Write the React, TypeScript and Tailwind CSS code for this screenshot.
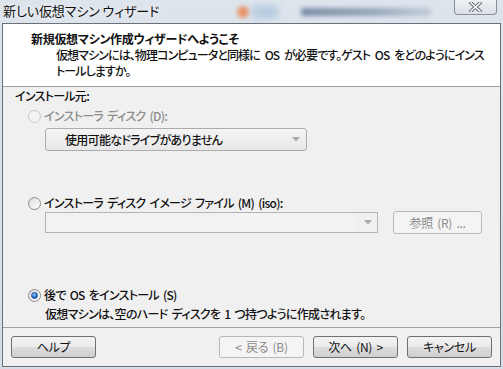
import React from "react";

const font = "[font-family:'Noto_Sans_CJK_JP','Noto_Sans',sans-serif] [font-feature-settings:'palt']";

function Radio({ checked = false, disabled = false }: { checked?: boolean; disabled?: boolean }) {
  return (
    <span
      className={
        "relative flex h-[13px] w-[13px] shrink-0 items-center justify-center rounded-full border " +
        (disabled
          ? "border-[#c8c8c8] bg-[#f4f4f4]"
          : "border-[#8a8a8a] bg-[linear-gradient(135deg,#dcdcdc,#ffffff)]")
      }
    >
      {checked && (
        <span className="h-[7px] w-[7px] rounded-full border border-[#1b4d9a] bg-[radial-gradient(circle_at_40%_35%,#9fd3ff,#2a6fcf_55%,#0d3a85)]" />
      )}
    </span>
  );
}

function Arrow({ color = "#a7a7a7" }: { color?: string }) {
  return (
    <svg width="8" height="5" viewBox="0 0 8 5">
      <path d="M0 0 L8 0 L4 4.5 Z" fill={color} />
    </svg>
  );
}

function Btn({ children, disabled = false, className = "" }: { children: React.ReactNode; disabled?: boolean; className?: string }) {
  return (
    <div
      className={
        "flex h-[22px] w-[85px] items-center justify-center whitespace-nowrap rounded-[3px] border text-[12px] font-normal leading-none tracking-[-0.3px] [word-spacing:2px] " +
        (disabled
          ? "border-[#b5b9bd] bg-[#f4f4f4] text-[#8a8a8a]"
          : "border-[#707070] bg-[linear-gradient(to_bottom,#f2f2f2_0%,#ebebeb_50%,#dddddd_51%,#cfcfcf_100%)] text-[#111]") +
        " " +
        className
      }
    >
      {children}
    </div>
  );
}

export default function App() {
  return (
    <div className={"h-[369px] w-[503px] overflow-hidden bg-[linear-gradient(to_bottom,#dde4ec,#d5dde7)] " + font}>
      {/* title bar */}
      <div className="flex h-[23px] items-start">
        <div className="ml-[3px] mt-[2px] whitespace-nowrap text-[13px] leading-[17px] tracking-[-0.1px] text-[#111] [text-shadow:0_0_6px_#ffffff]">
          新しい仮想マシン ウィザード
        </div>
        <div className="ml-[78px] mt-[6px] h-[12px] w-[12px] rounded-full bg-[#e9946a] blur-[2px]" />
        <div className="ml-[2px] mt-[5px] h-[14px] w-[28px] rounded-full bg-[#b9cde0] blur-[3px]" />
        <div className="ml-[22px] mt-[8px] h-[8px] w-[130px] rounded-[2px] bg-[linear-gradient(to_right,#7c8ea6,#9aa9bd_60%,#c2ccd8)] blur-[2px]" />
        <div className="ml-auto mr-[6px] flex h-[15px] w-[43px] items-center justify-center rounded-b-[4px] border border-t-0 border-[#8a909a] bg-[linear-gradient(to_bottom,#eef1f5,#dbe0e7)]">
          <svg width="13" height="10" viewBox="0 0 13 10">
            <path d="M2 1 L11 9 M11 1 L2 9" stroke="#5f6670" strokeWidth="3.4" strokeLinecap="square" />
            <path d="M2 1 L11 9 M11 1 L2 9" stroke="#ffffff" strokeWidth="1.6" strokeLinecap="square" />
          </svg>
        </div>
      </div>

      {/* client */}
      <div className="ml-[2px] flex h-[344px] w-[499px] flex-col border border-[#6b7077] bg-[#f0f0f0]">
        {/* header */}
        <div className="h-[63px] shrink-0 border-b border-[#a0a0a0] bg-white">
          <div className="whitespace-nowrap pl-[28px] pt-[7px] text-[12px] font-bold leading-[16px] tracking-[-0.3px] text-[#111]">
            新規仮想マシン作成ウィザードへようこそ
          </div>
          <div className="whitespace-nowrap pl-[53px] text-[12px] font-medium leading-[16px] tracking-[-0.9px] text-[#111] [word-spacing:3px]">
            仮想マシンには、物理コンピュータと同様に OS が必要です。ゲスト OS をどのようにインス
            <br />
            トールしますか。
          </div>
        </div>

        {/* body */}
        <div className="flex h-[240px] shrink-0 flex-col whitespace-nowrap text-[12px] font-medium leading-[16px] tracking-[-0.7px] text-[#111] [word-spacing:2px]">
          <div className="pl-[12px] pt-[1px]">インストール元:</div>

          <div className="mt-[4px] flex items-center gap-[3px] pl-[25px] text-[#8d8d8d]">
            <Radio disabled />
            <span>インストーラ ディスク (D):</span>
          </div>
          <div className="ml-[42px] mt-[4px] flex h-[23px] w-[262px] items-center justify-between rounded-[3px] border border-[#acacac] bg-[linear-gradient(to_bottom,#f4f4f4,#e8e8e8)] pl-[19px] pr-[6px]">
            <span className="text-[#111]">使用可能なドライブがありません</span>
            <Arrow />
          </div>

          <div className="mt-[44px] flex items-center gap-[3px] pl-[25px]">
            <Radio />
            <span>インストーラ ディスク イメージ ファイル (M) (iso):</span>
          </div>
          <div className="flex items-center">
            <div className="ml-[42px] flex h-[21px] w-[333px] items-center justify-between border border-[#b4b4b4] bg-[#f0f0f0] pr-[5px]">
              <span className="h-full w-[311px] bg-[#f2f2f2]" />
              <Arrow color="#a8a8a8" />
            </div>
            <Btn disabled className="ml-[15px] h-[23px] w-[89px]">
              参照 (R) ...
            </Btn>
          </div>

          <div className="mt-[53px] flex items-center gap-[3px] pl-[25px]">
            <Radio checked />
            <span>後で OS をインストール (S)</span>
          </div>
          <div className="mt-[3px] pl-[42px]">仮想マシンは、空のハード ディスクを 1 つ持つように作成されます。</div>
        </div>

        {/* footer */}
        <div className="flex flex-1 items-start border-t border-[#a0a0a0] pl-[8px] pt-[8px]">
          <Btn className="w-[84px]">ヘルプ</Btn>
          <Btn disabled className="ml-[123px]">
            &lt; 戻る (B)
          </Btn>
          <Btn className="ml-[9px]">次へ (N) &gt;</Btn>
          <Btn className="ml-[9px]">キャンセル</Btn>
        </div>
      </div>
    </div>
  );
}
